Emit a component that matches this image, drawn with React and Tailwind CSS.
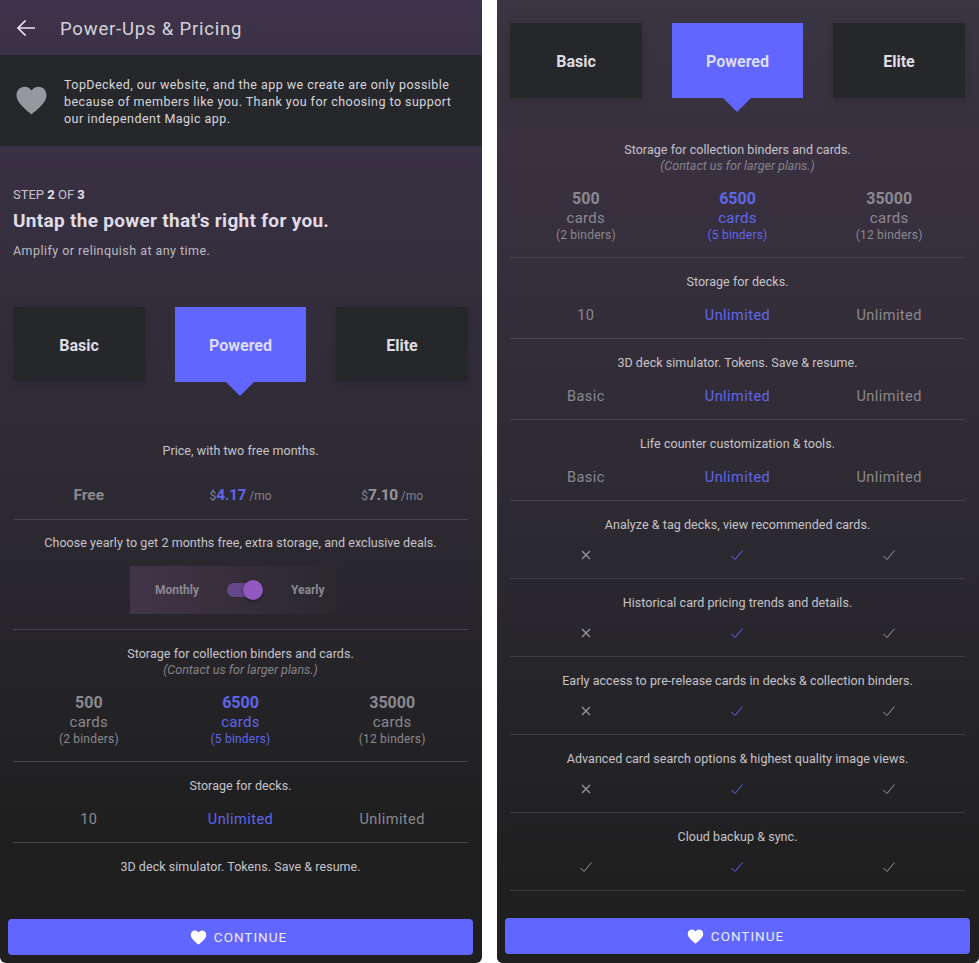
import React from "react";

const font = { fontFamily: '"Roboto", "Liberation Sans", sans-serif' };

function Heart({ className }) {
  return (
    <svg viewBox="0 0 24 24" className={className} fill="currentColor">
      <path d="M12 22 C10.8 21 2 14.6 1.2 9.4 C0.5 5 3.6 2 7 2 C9 2 10.9 3 12 4.8 C13.1 3 15 2 17 2 C20.4 2 23.5 5 22.8 9.4 C22 14.6 13.2 21 12 22 Z" />
    </svg>
  );
}

function Check({ className }) {
  return (
    <svg viewBox="0 0 12 12" className={className} fill="none" stroke="currentColor" strokeWidth="1">
      <path d="M0.5 7 L4 10.5 L11.5 1.5" />
    </svg>
  );
}

function Cross({ className }) {
  return (
    <svg viewBox="0 0 10 10" className={className} fill="none" stroke="currentColor" strokeWidth="1.3">
      <path d="M1 1 L9 9 M9 1 L1 9" />
    </svg>
  );
}

function Tiles() {
  return (
    <div className="flex justify-between pl-[13px] pr-[14px]">
      <div className="flex h-[75px] w-[132px] items-center justify-center bg-[#26272b] pt-[2px] text-[16px] font-bold text-[#dfdce3] shadow-[0_2px_10px_rgba(0,0,0,0.15)]">Basic</div>
      <div className="relative flex h-[75px] w-[131px] items-center justify-center bg-[#6066ff] pt-[2px] text-[16px] font-bold text-[#dcdcf5]">
        Powered
        <div className="absolute left-[51px] top-[75px] h-0 w-0 border-x-[14px] border-t-[14px] border-x-transparent border-t-[#6066ff]" />
      </div>
      <div className="flex h-[75px] w-[132px] items-center justify-center bg-[#26272b] pt-[2px] text-[16px] font-bold text-[#dfdce3] shadow-[0_2px_10px_rgba(0,0,0,0.15)]">Elite</div>
    </div>
  );
}

function Cols({ a, b, c, className = "" }) {
  return (
    <div className={`grid grid-cols-3 text-center ${className}`}>
      <div className="text-[#8b898f]">{a}</div>
      <div className="text-[#6066e8]">{b}</div>
      <div className="text-[#8b898f]">{c}</div>
    </div>
  );
}

function Title({ children }) {
  return <div className="text-center text-[12.5px] leading-[16px] tracking-[0.05px] text-[#c6c4ca]">{children}</div>;
}

function StorageCards({ first }) {
  const col = (n, b) => (
    <div className="flex flex-col items-center">
      <span className="text-[16px] font-bold leading-[19px]">{n}</span>
      <span className="text-[15px] leading-[20px] tracking-[0.3px]">cards</span>
      <span className="text-[12px] leading-[14px] tracking-[0.2px]">{b}</span>
    </div>
  );
  return (
    <div className={first ? "h-[129px] border-b border-[#46444c] pt-[13px]" : "h-[132px] border-b border-[#46444c] pt-[16px]"}>
      <Title>Storage for collection binders and cards.</Title>
      <div className="text-center text-[12.5px] italic leading-[16px] text-[#85838a]">(Contact us for larger plans.)</div>
      <Cols className="mt-[15px]" a={col("500", "(2 binders)")} b={col("6500", "(5 binders)")} c={col("35000", "(12 binders)")} />
    </div>
  );
}

function TextRow({ title, a, b, c }) {
  return (
    <div className="h-[81px] border-b border-[#46444c] pt-[16px]">
      <Title>{title}</Title>
      <Cols className="mt-[16px] text-[14.5px] leading-[20px] tracking-[0.45px]" a={a} b={b} c={c} />
    </div>
  );
}

function IconRow({ title, no }) {
  return (
    <div className="h-[78px] border-b border-[#3d3c42] pt-[16px]">
      <Title>{title}</Title>
      <div className="mt-[15px] grid grid-cols-3">
        <div className="flex h-[14px] items-center justify-center text-[#98969d]">
          {no ? <Cross className="h-[10px] w-[10px]" /> : <Check className="h-[12px] w-[12px]" />}
        </div>
        <div className="flex h-[14px] items-center justify-center text-[#6066ff]">
          <Check className="h-[12px] w-[12px]" />
        </div>
        <div className="flex h-[14px] items-center justify-center text-[#98969d]">
          <Check className="h-[12px] w-[12px]" />
        </div>
      </div>
    </div>
  );
}

function ContinueBar({ bottom }) {
  return (
    <div className={`absolute left-[8px] right-[9px] flex h-[36px] items-center justify-center gap-[7px] rounded-[4px] bg-[#6066ff] pr-[4px] text-[13.5px] tracking-[1px] text-[#ecebff] ${bottom}`}>
      <Heart className="h-[17px] w-[17px] text-white" />
      <span>CONTINUE</span>
    </div>
  );
}

function LeftPanel() {
  return (
    <section className="relative h-[963px] w-[482px] overflow-hidden rounded-b-[6px] bg-gradient-to-b from-[#3d334a] via-[#2f2b35] via-47% to-[#1f1f20] to-85%">
      <header className="flex h-[55px] items-center pl-[16px]">
        <svg viewBox="0 0 20 20" className="h-[20px] w-[20px] text-[#e8e2f0]" fill="none" stroke="currentColor" strokeWidth="1.7">
          <path d="M19 10 H2 M9.5 2.5 L2 10 L9.5 17.5" />
        </svg>
        <h1 className="ml-[24px] pt-[4px] text-[18.5px] font-normal tracking-[0.8px] text-[#d5d2d9]">Power-Ups &amp; Pricing</h1>
      </header>
      <div className="flex h-[91px] items-center bg-[#26272b] pl-[15px]">
        <Heart className="h-[33px] w-[33px] shrink-0 text-[#96989d]" />
        <p className="ml-[16px] pt-[2px] text-[12.5px] leading-[17px] tracking-[0.45px] text-[#d8d6dc]">
          TopDecked, our website, and the app we create are only possible
          <br />
          because of members like you. Thank you for choosing to support
          <br />
          our independent Magic app.
        </p>
      </div>
      <div className="px-[13px] pt-[41px]">
        <div className="text-[13px] leading-[16px] text-[#c6c4ca]">
          STEP <b className="text-[#e4e1e8]">2</b> OF <b className="text-[#e4e1e8]">3</b>
        </div>
        <div className="mt-[6px] text-[19px] font-bold leading-[24px] tracking-[0.3px] text-[#e0dce6]">Untap the power that's right for you.</div>
        <div className="mt-[10px] text-[12.5px] leading-[16px] tracking-[0.45px] text-[#bdbbc1]">Amplify or relinquish at any time.</div>
      </div>
      <div className="mt-[48px]">
        <Tiles />
      </div>
      <div className="ml-[13px] mr-[14px] mt-[61px]">
        <div className="h-[77px] border-b border-[#46444c]">
          <Title>Price, with two free months.</Title>
          <Cols
            className="mt-[24px] items-baseline"
            a={<span className="text-[15.5px] font-bold text-[#8b898f]">Free</span>}
            b={
              <span className="text-[12px] text-[#85838a]">
                $<b className="text-[15.5px] tracking-[-0.3px] text-[#6066e8]">4.17</b> /mo
              </span>
            }
            c={
              <span className="text-[12px] text-[#85838a]">
                $<b className="text-[15.5px] tracking-[-0.3px] text-[#98969d]">7.10</b> /mo
              </span>
            }
          />
        </div>
        <div className="h-[110px] border-b border-[#46444c] pt-[15px]">
          <Title>Choose yearly to get 2 months free, extra storage, and exclusive deals.</Title>
          <div className="ml-[117px] mt-[15px] flex h-[48px] w-[207px] items-center bg-gradient-to-r from-[#423549] to-[#2a282d] text-[12px] font-bold text-[#8b898f]">
            <span className="ml-[25px] w-[56px]">Monthly</span>
            <div className="relative ml-[16px] h-[14px] w-[28px] rounded-full bg-[#66478a]">
              <div className="absolute -top-[3px] left-[16px] h-[20px] w-[20px] rounded-full bg-[#9159bf] shadow-[0_1px_3px_rgba(0,0,0,0.5)]" />
            </div>
            <span className="ml-[36px]">Yearly</span>
          </div>
        </div>
        <StorageCards />
        <TextRow title="Storage for decks." a="10" b="Unlimited" c="Unlimited" />
        <div className="pt-[16px]">
          <Title>3D deck simulator. Tokens. Save &amp; resume.</Title>
        </div>
      </div>
      <ContinueBar bottom="bottom-[8px]" />
    </section>
  );
}

function RightPanel() {
  return (
    <section className="relative h-[963px] w-[482px] overflow-hidden rounded-b-[6px] bg-[#1f1f20]">
      <div className="h-[129px] bg-gradient-to-b from-[#3a3542] to-[#36313c] pt-[23px]">
        <Tiles />
      </div>
      <div className="h-[834px] bg-gradient-to-b from-[#3a3141] via-[#2d2a32] via-45% to-[#1f1f20] to-90%">
        <div className="ml-[13px] mr-[14px]">
          <StorageCards first />
          <TextRow title="Storage for decks." a="10" b="Unlimited" c="Unlimited" />
          <TextRow title="3D deck simulator. Tokens. Save & resume." a="Basic" b="Unlimited" c="Unlimited" />
          <TextRow title="Life counter customization & tools." a="Basic" b="Unlimited" c="Unlimited" />
          <IconRow no title="Analyze & tag decks, view recommended cards." />
          <IconRow no title="Historical card pricing trends and details." />
          <IconRow no title="Early access to pre-release cards in decks & collection binders." />
          <IconRow no title="Advanced card search options & highest quality image views." />
          <IconRow title="Cloud backup & sync." />
        </div>
      </div>
      <ContinueBar bottom="bottom-[9px]" />
    </section>
  );
}

export default function App() {
  return (
    <div className="flex h-[963px] w-[979px] justify-between overflow-hidden bg-white" style={font}>
      <LeftPanel />
      <RightPanel />
    </div>
  );
}
